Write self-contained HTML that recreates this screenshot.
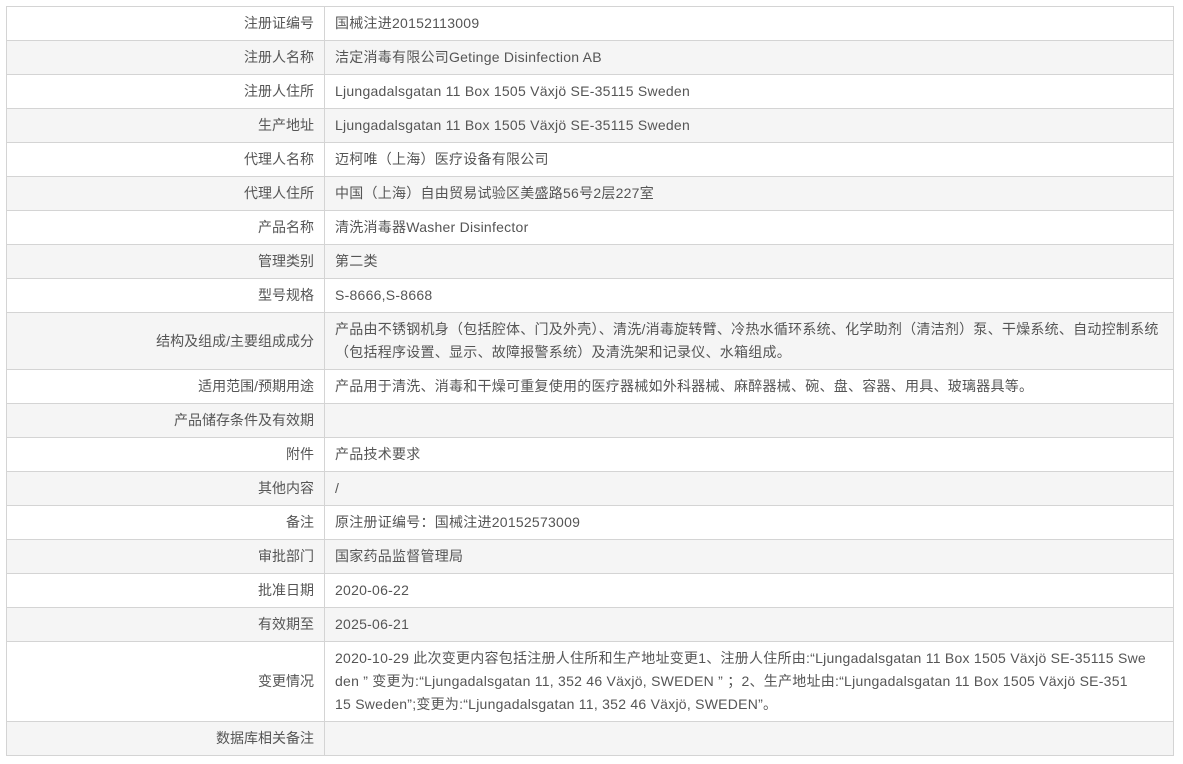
<!DOCTYPE html>
<html><head><meta charset="utf-8"><style>
body{margin:0;background:#fff;}
table{position:absolute;left:6px;top:6px;width:1168px;border-collapse:collapse;font-family:"Liberation Sans","Noto Sans CJK SC",sans-serif;font-size:14px;color:#555;letter-spacing:0.25px;}
td{border:1px solid #d4d4d4;padding:5px 10px;line-height:23px;vertical-align:middle;white-space:nowrap;}
td.l{width:297px;text-align:right;letter-spacing:0;}
tr:nth-child(even){background:#f5f5f5;}
</style></head><body>
<table>
<tr><td class="l">注册证编号</td><td>国械注进20152113009</td></tr>
<tr><td class="l">注册人名称</td><td>洁定消毒有限公司Getinge Disinfection AB</td></tr>
<tr><td class="l">注册人住所</td><td>Ljungadalsgatan 11 Box 1505 Växjö SE-35115 Sweden</td></tr>
<tr><td class="l">生产地址</td><td>Ljungadalsgatan 11 Box 1505 Växjö SE-35115 Sweden</td></tr>
<tr><td class="l">代理人名称</td><td>迈柯唯（上海）医疗设备有限公司</td></tr>
<tr><td class="l">代理人住所</td><td>中国（上海）自由贸易试验区美盛路56号2层227室</td></tr>
<tr><td class="l">产品名称</td><td>清洗消毒器Washer Disinfector</td></tr>
<tr><td class="l">管理类别</td><td>第二类</td></tr>
<tr><td class="l">型号规格</td><td>S-8666,S-8668</td></tr>
<tr><td class="l">结构及组成/主要组成成分</td><td>产品由不锈钢机身（包括腔体、门及外壳）、清洗/消毒旋转臂、冷热水循环系统、化学助剂（清洁剂）泵、干燥系统、自动控制系统<br>（包括程序设置、显示、故障报警系统）及清洗架和记录仪、水箱组成。</td></tr>
<tr><td class="l">适用范围/预期用途</td><td>产品用于清洗、消毒和干燥可重复使用的医疗器械如外科器械、麻醉器械、碗、盘、容器、用具、玻璃器具等。</td></tr>
<tr><td class="l">产品储存条件及有效期</td><td></td></tr>
<tr><td class="l">附件</td><td>产品技术要求</td></tr>
<tr><td class="l">其他内容</td><td>/</td></tr>
<tr><td class="l">备注</td><td>原注册证编号：国械注进20152573009</td></tr>
<tr><td class="l">审批部门</td><td>国家药品监督管理局</td></tr>
<tr><td class="l">批准日期</td><td>2020-06-22</td></tr>
<tr><td class="l">有效期至</td><td>2025-06-21</td></tr>
<tr><td class="l">变更情况</td><td>2020-10-29 此次变更内容包括注册人住所和生产地址变更1、注册人住所由:“Ljungadalsgatan 11 Box 1505 Växjö SE-35115 Swe<br>den ” 变更为:“Ljungadalsgatan 11, 352 46 Växjö, SWEDEN ” ；2、生产地址由:“Ljungadalsgatan 11 Box 1505 Växjö SE-351<br>15 Sweden”;变更为:“Ljungadalsgatan 11, 352 46 Växjö, SWEDEN”。</td></tr>
<tr><td class="l">数据库相关备注</td><td></td></tr>
</table>
</body></html>
